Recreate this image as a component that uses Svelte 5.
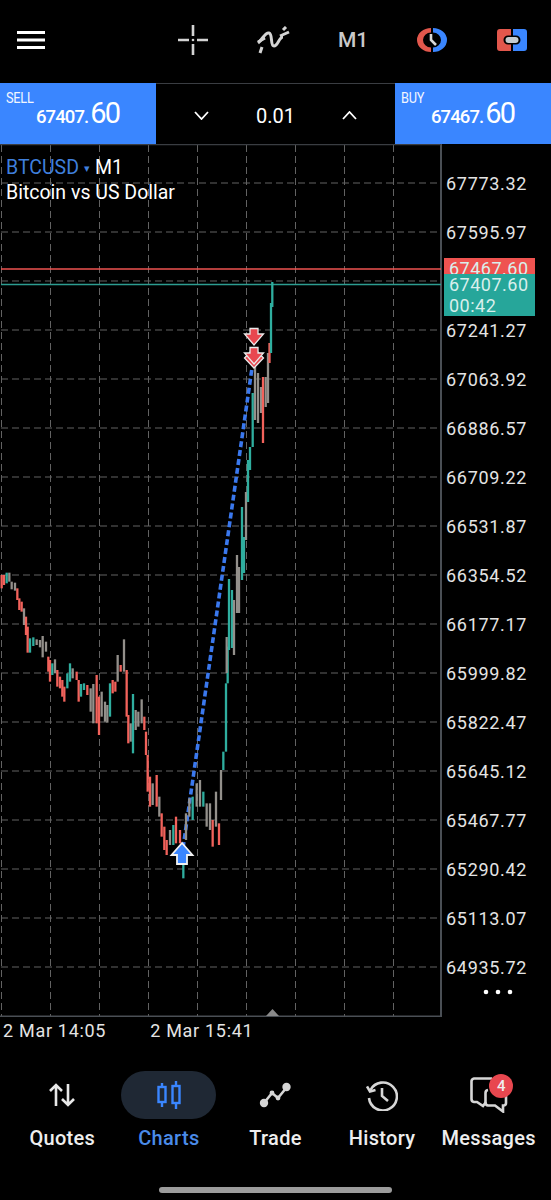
<script>
	// price axis labels, first one sits on y=183 and they step 49px
	const prices = [
		"67773.32", "67595.97", "", "67241.27", "67063.92", "66886.57", "66709.22", "66531.87", "66354.52",
		"66177.17", "65999.82", "65822.47", "65645.12", "65467.77", "65290.42", "65113.07", "64935.72"
	];
	const hLines = [...Array(18).keys()].map((i) => 183 + i * 49).filter((y) => y < 1016);
	const vLines = [...Array(9).keys()].map((i) => 1.5 + i * 49);

	// candles read off the screenshot: x, top, bottom, colour
	const colors = { r: "#f2625b", g: "#2fae9f", m: "#93908b" };
	const raw = `5,45,85,r 12,45,75,r 20,38,70,g 28,38,65,m 35,65,88,m 45,68,92,m 52,85,120,r 58,115,150,r 65,125,155,r
	72,145,195,m 78,170,225,r 83,200,278,r 90,235,278,g 100,232,258,g 110,238,255,m 120,240,262,m 128,228,292,m 138,245,275,m
	145,290,335,r 150,300,365,r 157,310,345,g 165,298,340,m 172,330,380,r 180,350,385,r 187,360,410,r 193,380,425,r 202,340,385,g
	210,310,365,g 218,325,355,m 230,335,360,r 236,360,425,r 243,372,410,g 252,370,390,g 262,375,405,r 272,385,455,m 280,372,490,m
	290,345,490,r 297,410,525,r 305,395,470,m 315,425,485,m 322,435,488,m 330,370,470,g 338,360,400,r 346,365,395,r 353,285,365,m
	362,315,335,r 372,238,335,m 380,330,470,r 385,465,550,r 392,490,545,m 399,402,580,g 407,450,510,m 415,455,500,m 425,418,490,m
	433,470,510,r 438,515,585,r 443,585,695,r 450,650,740,r 458,670,735,m 470,645,740,r 478,710,770,m 485,760,830,r 493,800,870,r
	500,840,885,r 510,810,855,m 520,795,855,g 528,770,850,r 540,810,850,r 550,880,955,g 558,760,840,m 568,715,770,m 578,710,780,g
	590,670,740,m 600,660,740,m 610,695,740,g 620,730,800,m 630,730,810,m 638,780,860,r 648,695,800,m 657,790,855,r 663,630,720,m
	670,575,630,g 678,370,575,g 683,260,370,g`;
	const left = raw.trim().split(/\s+/).map((s) => {
		const [x, a, b, c] = s.split(",");
		return { x: x / 3, y1: 560 + a / 3, y2: 560 + b / 3, c: colors[c] };
	});
	const right = [
		[226.7, 637, 673, "m"], [229, 579, 650, "g"], [232, 590, 648, "g"], [234, 600, 655, "m"], [237, 555, 613, "m"],
		[239, 567, 613, "m"], [242, 507, 580, "g"], [244, 537, 573, "g"], [246, 492, 540, "m"], [248, 460, 502, "g"],
		[250, 447, 470, "g"], [252.7, 393, 447, "g"], [255, 367, 420, "m"], [258, 373, 423, "m"], [261, 387, 413, "m"],
		[263, 377, 443, "r"], [265.7, 377, 407, "m"], [268, 353, 403, "m"], [269.5, 343, 363, "r"], [271, 303, 353, "g"],
		[272.3, 282, 307, "g"]
	].map(([x, y1, y2, c]) => ({ x, y1, y2, c: colors[c] }));
	const candles = [...left, ...right];

	const tabs = ["Quotes", "Charts", "Trade", "History", "Messages"];
</script>

<div class="page">
	<header class="toolbar">
		<svg class="menu" width="28" height="18" viewBox="0 0 28 18">
			<path d="M0 1.500H28M0 9H28M0 16.500H28" stroke="#fff" stroke-width="3" />
		</svg>
		<svg width="30" height="30" viewBox="0 0 30 30" class="tool">
			<path d="M0 15H11M19 15H30M15 0V11M15 19V30" stroke="#d4d4d4" stroke-width="2.600" />
			<circle cx="15" cy="15" r="1.300" fill="#d4d4d4" />
		</svg>
		<svg width="34" height="28" viewBox="0 0 34 28" class="tool">
			<path d="M2 17C7 13 9 6 13 7C17 8 14 20 18 20C22 20 23 11 27 11" fill="none" stroke="#d4d4d4" stroke-width="3" />
			<path d="M6 21L4 27M2 16L9 12M24 10L33 6M27 4L30 1" fill="none" stroke="#d4d4d4" stroke-width="3" />
		</svg>
		<span class="tool period">M1</span>
		<svg width="32" height="26" viewBox="0 0 32 26" class="tool">
			<path d="M15 1A14 12 0 0 0 15 25V20.500A8 7.500 0 0 1 15 5.500Z" fill="#e2574c" />
			<path d="M17 1A14 12 0 0 1 17 25V20.500A8 7.500 0 0 0 17 5.500Z" fill="#3a86ff" />
			<path d="M15 7V13L20 18" fill="none" stroke="#d8d8d8" stroke-width="2.600" />
		</svg>
		<svg width="32" height="24" viewBox="0 0 32 24" class="tool">
			<path d="M15 1H4A3 3 0 0 0 1 4V20A3 3 0 0 0 4 23H15V16.500H12A4.500 4.500 0 0 1 12 7.500H15Z" fill="#e2574c" />
			<path d="M17 1H28A3 3 0 0 1 31 4V20A3 3 0 0 1 28 23H17V16.500H20A4.500 4.500 0 0 0 20 7.500H17Z" fill="#3a86ff" />
			<rect x="9.500" y="9" width="13" height="6" rx="3" fill="#c5ccd0" />
		</svg>
	</header>

	<section class="trade">
		<div class="quote">
			<span class="side">SELL</span>
			<span class="price">67407.<b>60</b></span>
		</div>
		<div class="lots">
			<svg width="15" height="9" viewBox="0 0 15 9"><path d="M1 1L7.500 8L14 1" fill="none" stroke="#fff" stroke-width="1.800" /></svg>
			<span>0.01</span>
			<svg width="15" height="9" viewBox="0 0 15 9"><path d="M1 8L7.500 1L14 8" fill="none" stroke="#fff" stroke-width="1.800" /></svg>
		</div>
		<div class="quote">
			<span class="side">BUY</span>
			<span class="price">67467.<b>60</b></span>
		</div>
	</section>

	<div class="chart">
		<svg width="551" height="873" viewBox="0 144 551 873">
			{#each hLines as y}
				<line x1="1" x2="441" y1={y} y2={y} class="grid" />
			{/each}
			{#each vLines as x}
				<line x1={x} x2={x} y1="145" y2="1016" class="grid" />
			{/each}
			<path d="M441 144V1016.500H0" fill="none" stroke="#4a4f55" stroke-width="2" />
			<path d="M0 144.500H441" stroke="#3a3d42" stroke-width="1.500" />

			<line x1="1" x2="441" y1="269" y2="269" stroke="#ef5350" stroke-width="1.300" />
			<line x1="1" x2="441" y1="284.500" y2="284.500" stroke="#2c9d91" stroke-width="1.300" />

			<line x1="183" y1="848" x2="252" y2="368" stroke="#3a78ee" stroke-width="3.600" stroke-dasharray="6 3" />

			{#each candles as k}
				<line x1={k.x} x2={k.x} y1={k.y1} y2={k.y2} stroke={k.c} stroke-width="2.300" />
			{/each}

			<path d="M254 348L244.500 358L254 368L263.500 358Z" fill="#e8474f" stroke="#e9e9e9" stroke-width="1.300" />
			<path d="M250 328.500H258V334H263.500L254 345L244.500 334H250Z" fill="#e8474f" stroke="#e9e9e9" stroke-width="1.300" />
			<path d="M250 347.500H258V353H263.500L254 364L244.500 353H250Z" fill="#e8474f" stroke="#e9e9e9" stroke-width="1.300" />
			<path d="M182 843L192.500 855H187V864H177V855H171.500Z" fill="#3a86ff" stroke="#f2f2f2" stroke-width="1.800" />

			<rect x="444" y="258" width="91" height="16" fill="#ef5350" />
			<text x="449" y="275" class="tag">67467.60</text>
			<rect x="444" y="274" width="91" height="42" fill="#26a69a" />
			<text x="449" y="291" class="tag">67407.60</text>
			<text x="449" y="312" class="tag">00:42</text>

			{#each prices as p, i}
				<text x="446" y={183 + i * 49 + 6.500} class="axis">{p}</text>
			{/each}

			<path d="M266 1016L272.500 1009L279 1016Z" fill="#8a8a8a" />
			<circle cx="486" cy="992" r="2.300" fill="#fff" />
			<circle cx="498" cy="992" r="2.300" fill="#fff" />
			<circle cx="510" cy="992" r="2.300" fill="#fff" />
		</svg>
		<div class="legend">
			<div><span class="symbol">BTCUSD</span><span class="caret">▾</span>M1</div>
			<div>Bitcoin vs US Dollar</div>
		</div>
	</div>

	<div class="times">
		<span>2 Mar 14:05</span>
		<span>2 Mar 15:41</span>
	</div>

	<nav class="tabs">
		{#each tabs as tab, i}
			<div class="tab" class:active={i === 1}>
				<div class="icon">
					{#if i === 0}
						<svg width="26" height="24" viewBox="0 0 26 24">
							<path d="M7 23V2M1 8L7 2L13 8" fill="none" stroke="#e8e8e8" stroke-width="2.600" />
							<path d="M19 1V22M13 16L19 22L25 16" fill="none" stroke="#e8e8e8" stroke-width="2.600" />
						</svg>
					{:else if i === 1}
						<svg width="26" height="30" viewBox="0 0 26 30">
							<path d="M6 3V27M20 1V29" stroke="#3a86ff" stroke-width="2.400" />
							<rect x="2.500" y="7" width="7" height="15" fill="#1f2834" stroke="#3a86ff" stroke-width="2.400" />
							<rect x="16.500" y="6" width="7" height="17" fill="#1f2834" stroke="#3a86ff" stroke-width="2.400" />
						</svg>
					{:else if i === 2}
						<svg width="32" height="26" viewBox="0 0 32 26">
							<path d="M5 21L13 11L19 16L28 5" fill="none" stroke="#d6d6d6" stroke-width="2.600" />
							<circle cx="5" cy="21" r="4.200" fill="#d6d6d6" />
							<circle cx="13" cy="11" r="2.400" fill="#d6d6d6" />
							<circle cx="19" cy="16" r="2.400" fill="#d6d6d6" />
							<circle cx="27.500" cy="5" r="4.200" fill="#d6d6d6" />
						</svg>
					{:else if i === 3}
						<svg width="32" height="32" viewBox="0 0 32 32">
							<path d="M4.500 11A14 14 0 1 1 3 19" fill="none" stroke="#d6d6d6" stroke-width="2.600" />
							<path d="M1 7.500L4 12.500L9.500 11" fill="none" stroke="#d6d6d6" stroke-width="2.600" />
							<path d="M16 9V17L22 22" fill="none" stroke="#d6d6d6" stroke-width="2.600" />
						</svg>
					{:else}
						<svg width="38" height="36" viewBox="0 0 38 36">
							<path d="M22 1.500H4A3 3 0 0 0 1.500 4V22A3 3 0 0 0 4 25H7L13 29L16 25" fill="none" stroke="#d6d6d6" stroke-width="2.600" />
							<path d="M18 13A3 3 0 0 0 15.500 16V26A3 3 0 0 0 18 28.500H25L33 34.500V28.500H34A2.500 2.500 0 0 0 36 26V16" fill="none" stroke="#d6d6d6" stroke-width="2.600" />
						</svg>
						<span class="badge">4</span>
					{/if}
				</div>
				<span class="label">{tab}</span>
			</div>
		{/each}
	</nav>

	<div class="home"></div>
</div>

<style>
	:global(body) {
		background: #000;
	}

	.page {
		width: 551px;
		height: 1200px;
		background: #000;
		color: #fff;
		font-family: Roboto, sans-serif;
		overflow: hidden;
	}

	.toolbar {
		height: 83px;
		padding-left: 17px;
		display: flex;
		align-items: center;
		gap: 48px;
		box-sizing: border-box;
	}
	.menu {
		margin-top: -3px;
		margin-right: 85px;
	}
	.tool {
		margin-top: -3px;
		flex: none;
	}
	.period {
		font-size: 21px;
		font-weight: 500;
		color: #c9c9c9;
		width: 30px;
	}

	.trade {
		height: 61px;
		display: flex;
	}
	.quote {
		background: #3a86ff;
		width: 156px;
		box-sizing: border-box;
		padding: 7px 0 0 6px;
		position: relative;
	}
	.quote:last-child {
		flex: 1;
	}
	.side {
		display: block;
		font-size: 15px;
		line-height: 16px;
		letter-spacing: -0.3px;
		transform: scaleX(0.85);
		transform-origin: left;
		color: #f2f6ff;
	}
	.price {
		display: block;
		margin: -9px 0 0 30px;
		font-size: 18.500px;
		font-weight: 500;
		line-height: 32px;
		letter-spacing: -0.9px;
	}
	.price b {
		font-size: 29px;
		font-weight: 400;
		letter-spacing: -2px;
		margin-left: 2px;
	}
	.lots {
		flex: none;
		width: 239px;
		box-sizing: border-box;
		border-top: 1px solid #3a3d42;
		padding: 3px 38px 0 38px;
		display: flex;
		align-items: center;
		justify-content: space-between;
		font-size: 20px;
	}

	.chart {
		position: relative;
		height: 873px;
	}
	.chart svg {
		display: block;
	}
	.grid {
		stroke: #626262;
		stroke-width: 1;
		stroke-dasharray: 7 4;
	}
	.axis {
		font-size: 18px;
		letter-spacing: 0.7px;
		fill: #e4e4e4;
	}
	.tag {
		font-size: 18px;
		letter-spacing: 0.5px;
		fill: #d9efec;
	}
	.legend {
		position: absolute;
		left: 6px;
		top: 12px;
		font-size: 19.500px;
		line-height: 24px;
	}
	.symbol {
		color: #3f7fdc;
	}
	.caret {
		color: #3f7fdc;
		font-size: 11px;
		margin: 0 5px 0 5px;
		vertical-align: 2px;
	}

	.times {
		height: 29px;
		padding: 3px 0 0 3px;
		box-sizing: border-box;
		font-size: 18px;
		letter-spacing: 0.7px;
		color: #e4e4e4;
		display: flex;
		gap: 44px;
	}

	.tabs {
		margin-top: 25px;
		padding: 0 9px;
		display: grid;
		grid-template-columns: repeat(5, 1fr);
		gap: 0;
	}
	.tab {
		display: flex;
		flex-direction: column;
		align-items: center;
	}
	.icon {
		position: relative;
		width: 95px;
		height: 48px;
		border-radius: 24px;
		display: flex;
		align-items: center;
		justify-content: center;
	}
	.active .icon {
		background: #1f2834;
	}
	.label {
		margin-top: 8px;
		font-size: 20px;
		font-weight: 500;
		line-height: 22px;
		letter-spacing: 0.3px;
		color: #eee;
		white-space: nowrap;
	}
	.active .label {
		color: #4a8be8;
	}
	.badge {
		position: absolute;
		left: 48px;
		top: 3px;
		width: 24px;
		height: 24px;
		border-radius: 50%;
		background: #e8474f;
		color: #eee;
		font-size: 15px;
		font-weight: 500;
		line-height: 24px;
		text-align: center;
	}

	.home {
		width: 233px;
		height: 6px;
		border-radius: 3px;
		background: #9c9c9c;
		margin: 38px auto 0;
	}
</style>
